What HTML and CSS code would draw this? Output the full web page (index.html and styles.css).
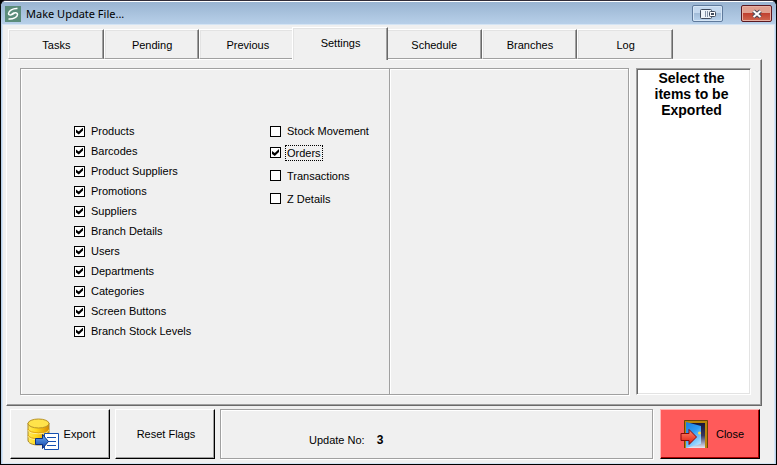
FILE: index.html
```html
<!DOCTYPE html>
<html lang="en">
<head>
  <meta charset="UTF-8" />
  <title>Make Update File...</title>
  <link rel="stylesheet" href="styles.css">
</head>
<body>
  <div class="window">
    <header class="titlebar">
      <svg class="app-icon" viewBox="0 0 16 16" aria-hidden="true">
        <rect width="16" height="16" fill="#5b8c7a" />
        <path d="M12.5 2.5C8 2 3.5 5 3.5 7.5C3.5 9.5 7 9.5 9.5 7" fill="none" stroke="#fff" stroke-width="1.5" />
        <path d="M3.5 13C8 13.5 12.5 11 12.5 8.5C12.5 6.5 9 6 6.5 8.5" fill="none" stroke="#fff" stroke-width="1.5" />
      </svg>
      <h1>Make Update File...</h1>
      <button class="caption-btn" type="button" aria-label="Switch display">
        <svg width="16" height="12" viewBox="0 0 16 12">
          <rect x="0.5" y="1.5" width="11" height="9" rx="1" fill="#eef4fa" stroke="#3f4a5c" />
          <path d="M5.5 3v6M7.5 3v6" stroke="#8795aa" />
          <rect x="9.5" y="3.5" width="6" height="5" rx="1" fill="#fff" stroke="#3f4a5c" />
          <rect x="11" y="5" width="3" height="2" fill="#3f4a5c" />
        </svg>
      </button>
      <button class="caption-btn caption-close" type="button" aria-label="Close window">
        <svg width="12" height="10" viewBox="0 0 12 10">
          <path d="M2.5 2l7 6M9.5 2l-7 6" stroke="#4a4a58" stroke-width="4" />
          <path d="M2.5 2l7 6M9.5 2l-7 6" stroke="#fff" stroke-width="2" />
        </svg>
      </button>
    </header>

    <main class="client">
      <div class="tabs" role="tablist">
        <button type="button" role="tab">Tasks</button>
        <button type="button" role="tab">Pending</button>
        <button type="button" role="tab">Previous</button>
        <button type="button" role="tab" class="active" aria-selected="true">Settings</button>
        <button type="button" role="tab">Schedule</button>
        <button type="button" role="tab">Branches</button>
        <button type="button" role="tab">Log</button>
      </div>

      <section class="panel" role="tabpanel">
        <div class="frames">
          <div class="frame options">
            <div class="checks">
              <label><input type="checkbox" checked><span>Products</span></label>
              <label><input type="checkbox" checked><span>Barcodes</span></label>
              <label><input type="checkbox" checked><span>Product Suppliers</span></label>
              <label><input type="checkbox" checked><span>Promotions</span></label>
              <label><input type="checkbox" checked><span>Suppliers</span></label>
              <label><input type="checkbox" checked><span>Branch Details</span></label>
              <label><input type="checkbox" checked><span>Users</span></label>
              <label><input type="checkbox" checked><span>Departments</span></label>
              <label><input type="checkbox" checked><span>Categories</span></label>
              <label><input type="checkbox" checked><span>Screen Buttons</span></label>
              <label><input type="checkbox" checked><span>Branch Stock Levels</span></label>
            </div>
            <div class="checks checks-wide">
              <label><input type="checkbox"><span>Stock Movement</span></label>
              <label><input type="checkbox" checked><span class="focused">Orders</span></label>
              <label><input type="checkbox"><span>Transactions</span></label>
              <label><input type="checkbox"><span>Z Details</span></label>
            </div>
          </div>
          <div class="frame blank"></div>
        </div>
        <aside class="hint">Select the<br>items to be<br>Exported</aside>
      </section>

      <footer class="footer">
        <button class="btn" type="button">
          <svg width="32" height="32" viewBox="0 0 32 32" aria-hidden="true">
            <defs>
              <linearGradient id="gold">
                <stop offset="0" stop-color="#ffe95a" />
                <stop offset="0.4" stop-color="#ffd91c" />
                <stop offset="1" stop-color="#d98a00" />
              </linearGradient>
              <linearGradient id="blue" x2="0" y2="1">
                <stop offset="0" stop-color="#6fb0f4" />
                <stop offset="1" stop-color="#0d3fa8" />
              </linearGradient>
            </defs>
            <path d="M1 5v17c0 3 4 5 10.5 5S22 25 22 22V5z" fill="url(#gold)" stroke="#a88628" />
            <path d="M1 12c1 5 20 5 21 0M1 18c1 5 20 5 21 0" fill="none" stroke="#fff3a0" />
            <path d="M1 11c1 5 20 5 21 0M1 17c1 5 20 5 21 0" fill="none" stroke="#e0a510" />
            <ellipse cx="11.5" cy="5.5" rx="10.5" ry="4.5" fill="#ffe34a" stroke="#b8932a" />
            <path d="M17.5 15.5h14v16h-14z" fill="#fff" stroke="#1650b0" />
            <path d="M20 19.5h9M20 23.5h9M20 27.5h9" stroke="#1650b0" />
            <path d="M8.5 20.5h7v-4l6 7-6 7v-4h-7z" fill="url(#blue)" stroke="#0b2e80" />
          </svg>
          <span>Export</span>
        </button>
        <button class="btn" type="button">Reset Flags</button>
        <div class="status">
          <span>Update No:</span>
          <strong>3</strong>
        </div>
        <button class="btn btn-close" type="button">
          <svg width="29" height="30" viewBox="0 0 29 30" aria-hidden="true">
            <defs>
              <linearGradient id="door" x2="0.5" y2="1">
                <stop offset="0" stop-color="#1c7ce0" />
                <stop offset="0.5" stop-color="#2f9cf4" />
                <stop offset="1" stop-color="#a8dcff" />
              </linearGradient>
              <linearGradient id="night" x2="0" y2="1">
                <stop offset="0" stop-color="#17153a" />
                <stop offset="0.5" stop-color="#38365e" />
                <stop offset="1" stop-color="#e8e8f4" />
              </linearGradient>
              <linearGradient id="red" x2="0" y2="1">
                <stop offset="0" stop-color="#ff8a70" />
                <stop offset="1" stop-color="#e01808" />
              </linearGradient>
            </defs>
            <path d="M4 1h24v28H4z" fill="#b8860b" />
            <path d="M4.5 29V1.5h23V29" fill="none" stroke="#6a4208" />
            <path d="M6 4h19v25H6z" fill="url(#night)" />
            <path d="M6 3l15 4v18L6 29z" fill="url(#door)" />
            <circle cx="19.5" cy="14" r="1.5" fill="#ffd84a" />
            <path d="M1 14.5h8v-4l7.5 7.5-7.5 7.5v-4h-8z" fill="url(#red)" stroke="#8a0808" />
          </svg>
          <span>Close</span>
        </button>
      </footer>
    </main>
  </div>
</body>
</html>
```
FILE: styles.css
```css
* {
  box-sizing: border-box;
}

body {
  margin: 0;
  background: #000;
  color: #000;
  font-family: "Liberation Sans", Arial, sans-serif;
  font-size: 11px;
  line-height: 14px;
}

button {
  padding: 0;
  font: inherit;
  color: inherit;
}

.window {
  display: flex;
  flex-direction: column;
  min-height: 100vh;
  border: 1px solid #000;
  border-top: 1px solid #302c38;
  border-radius: 6px 6px 0 0;
  background: #b9d1ea;
  overflow: hidden;
}

.titlebar {
  display: flex;
  align-items: center;
  height: 24px;
  padding: 0 4px;
  border-top: 1px solid #fff;
  background: linear-gradient(#99b4d1, #b9d1ea);
}

.titlebar h1 {
  flex: 1;
  margin: 0 0 0 5px;
  font-family: "Noto Sans", sans-serif;
  font-size: 11px;
  font-weight: normal;
}

.app-icon {
  width: 16px;
  height: 16px;
}

.caption-btn {
  display: flex;
  align-items: center;
  justify-content: center;
  width: 31px;
  height: 17px;
  margin-right: 18px;
  border: 1px solid #5f7a9c;
  border-radius: 2px;
  background: linear-gradient(#c4d8ee 45%, #a2bcd8 50%, #b9d3ee);
  box-shadow: inset 0 0 0 1px #d5e5f5;
}

.caption-close {
  margin-right: 0;
  border-color: #5a1820;
  background: linear-gradient(#e0a090 45%, #c04030 50%, #d06850);
  box-shadow: inset 0 0 0 1px #e8b0a4;
}

.client {
  display: flex;
  flex: 1;
  flex-direction: column;
  margin: 0 2px 1px;
  padding: 2px 12px 4px 3px;
  background: #f0f0f0;
  box-shadow: 0 0 0 1px #d4e4f4, 0 1px 0 1px #38c0d8;
}

.tabs {
  display: flex;
  align-items: flex-end;
  padding: 0 89px 0 2px;
}

.tabs button {
  flex: 1;
  height: 30px;
  padding: 2px 0 0 1px;
  border: 1px solid #fff;
  border-right-color: #696969;
  border-bottom-color: #a0a0a0;
  background: #f0f0f0;
  box-shadow: inset -1px 0 #a0a0a0, inset 1px 1px #e3e3e3;
}

.tabs .active {
  z-index: 1;
  height: 33px;
  margin: 0 -2px -1px -3px;
  padding: 0 0 2px 1px;
  border-bottom: 0;
}

.panel {
  display: flex;
  flex: 1;
  gap: 7px;
  padding: 8px 10px 10px 13px;
  border: 1px solid #fff;
  border-right-color: #696969;
  border-bottom-color: #696969;
  box-shadow: inset -1px -1px #a0a0a0;
}

.frames {
  display: grid;
  flex: 1;
  grid-template-columns: minmax(0, 371fr) minmax(0, 239fr);
}

.frame {
  border: 1px solid #a0a0a0;
  box-shadow: inset 1px 1px #fff, 1px 1px #fff;
}

.options {
  display: flex;
  padding: 52px 0 0 53px;
}

.blank {
  border-left: 0;
}

.checks {
  width: 196px;
}

.checks label {
  display: flex;
  align-items: center;
  height: 20px;
}

.checks-wide {
  width: auto;
}

.checks-wide label {
  height: 23px;
}

.checks-wide label:first-child {
  height: 20px;
}

.checks input {
  appearance: none;
  display: grid;
  place-content: center;
  width: 11px;
  height: 11px;
  margin: 0 4px 0 0;
  border: 1px solid #000;
  background: #fff;
}

.checks input:checked::before {
  content: "";
  width: 7px;
  height: 7px;
  background: #000;
  clip-path: polygon(0 28%, 40% 58%, 100% 0, 100% 42%, 40% 100%, 0 72%);
}

.checks span {
  padding: 0 1px;
  border: 1px solid transparent;
}

.checks .focused {
  border: 1px dotted #000;
}

.hint {
  width: 115px;
  padding: 1px 4px 0 0;
  border: 1px solid #a0a0a0;
  border-right-color: #fff;
  border-bottom-color: #fff;
  background: #fff;
  box-shadow: inset 1px 1px #696969, inset -1px -1px #e3e3e3;
  font-size: 14px;
  font-weight: bold;
  line-height: 16px;
  text-align: center;
}

.footer {
  display: flex;
  gap: 5px;
  padding: 3px 2px 0 4px;
}

.btn {
  display: flex;
  align-items: center;
  justify-content: center;
  gap: 5px;
  width: 100px;
  height: 50px;
  padding-left: 2px;
  border: 1px solid #fff;
  border-right-color: #000;
  border-bottom-color: #000;
  background: #f0f0f0;
  box-shadow: inset -1px -1px #a0a0a0;
}

.btn-close {
  gap: 7px;
  padding-left: 4px;
  border-top-color: #ffb4b4;
  border-left-color: #ffb4b4;
  background: #ff5a5a;
  box-shadow: inset -1px -1px #a80000;
}

.status {
  display: flex;
  flex: 1;
  align-items: center;
  gap: 12px;
  margin-right: 2px;
  padding: 12px 0 0 88px;
  border: 1px solid #a0a0a0;
  box-shadow: inset 1px 1px #fff, 1px 1px #fff;
}

.status strong {
  font-size: 12px;
}
```
